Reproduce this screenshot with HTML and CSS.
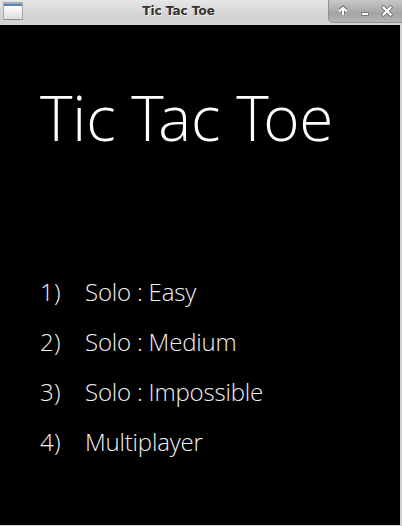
FILE: index.html
```html
<!DOCTYPE html>
<html lang="en">
<head>
    <meta charset="UTF-8">
    <meta name="viewport" content="width=device-width, initial-scale=1.0">
    <title>Tic Tac Toe</title>
    <link rel="stylesheet" href="styles.css">
</head>
<body>

<div class="window">
    <header class="titlebar">
        <div class="app-icon"></div>
        <div class="caption">Tic Tac Toe</div>
        <div class="controls">
            <svg width="74" height="23" viewBox="0 0 74 23" fill="none">
                <path d="M15 8 V14.5 M11.7 10.8 L15 7.8 L18.3 10.8" stroke="#777" stroke-width="4"/>
                <path d="M15 8 V15 M11.3 11.2 L15 7.8 L18.7 11.2" stroke="#fff" stroke-width="2"/>
                <path d="M33.5 12.5 H40.5 V15.5 H33.5 Z" stroke="#777" fill="#fff"/>
                <path d="M55.5 7.5 L62.5 14.5 M62.5 7.5 L55.5 14.5" stroke="#777" stroke-width="4" stroke-linecap="square"/>
                <path d="M55.5 7.5 L62.5 14.5 M62.5 7.5 L55.5 14.5" stroke="#fff" stroke-width="2.2" stroke-linecap="square"/>
            </svg>
        </div>
    </header>

    <main class="screen">
        <h1>Tic <span class="kern">T</span>ac <span class="kern">T</span>oe</h1>
        <ul class="menu">
            <li><span class="key">1)</span>Solo : Easy</li>
            <li><span class="key">2)</span>Solo : Medium</li>
            <li><span class="key">3)</span>Solo : Impossible</li>
            <li><span class="key">4)</span>Multiplayer</li>
        </ul>
    </main>
</div>

</body>
</html>
```
FILE: styles.css
```css
body {
    margin: 0;
    padding: 0;
    background-color: #d4d0d0;
}
.window {
    width: 402px;
    height: 526px;
    overflow: hidden;
}
.titlebar {
    display: flex;
    align-items: flex-start;
    height: 25px;
    background: linear-gradient(#e6e6e6, #d2d2d2 65%, #d2d2d2);
}
.app-icon {
    box-sizing: border-box;
    width: 20px;
    height: 18px;
    margin: 2px 0 0 3px;
    border: 1px solid #a8aaa8;
    border-bottom-color: #8e908e;
    background: linear-gradient(#a8b0b8 1px, #4a72b0 1px, #6f8fc0 3px, #fff 3px, #dcded8);
}
.caption {
    flex: 1;
    padding-left: 6px;
    font-family: 'DejaVu Sans', sans-serif;
    font-size: 12px;
    font-weight: bold;
    line-height: 22px;
    text-align: center;
    color: #333;
    text-shadow: 1px 1px 0 #f0f0f0;
}
.controls {
    box-sizing: border-box;
    width: 74px;
    height: 23px;
    background: linear-gradient(#c8c8c8, #a4a4a4 60%, #b4b4b4);
    border-left: 1px solid #929292;
    border-bottom: 1px solid #929292;
    border-bottom-left-radius: 5px;
}
.controls svg {
    display: block;
    margin-left: -1px;
}
.screen {
    box-sizing: border-box;
    width: 400px;
    height: 500px;
    padding: 50px 40px 0;
    background-color: #000;
    color: #fff;
    font-family: 'Open Sans', sans-serif;
    font-weight: 300;
}
h1 {
    margin: 0;
    font-size: 62px;
    font-weight: 300;
    line-height: 84px;
    letter-spacing: -0.2px;
    white-space: nowrap;
}
/* pull the round letters under the bar of the T */
.kern {
    letter-spacing: -5.5px;
}
.menu {
    margin: 108px 0 0;
    padding: 0;
    list-style: none;
    font-size: 24px;
    line-height: 50px;
    letter-spacing: -0.18px;
    color: #f0f0f0;
}
.menu li {
    display: flex;
}
.key {
    width: 45px;
    letter-spacing: 0.2px;
}
```
